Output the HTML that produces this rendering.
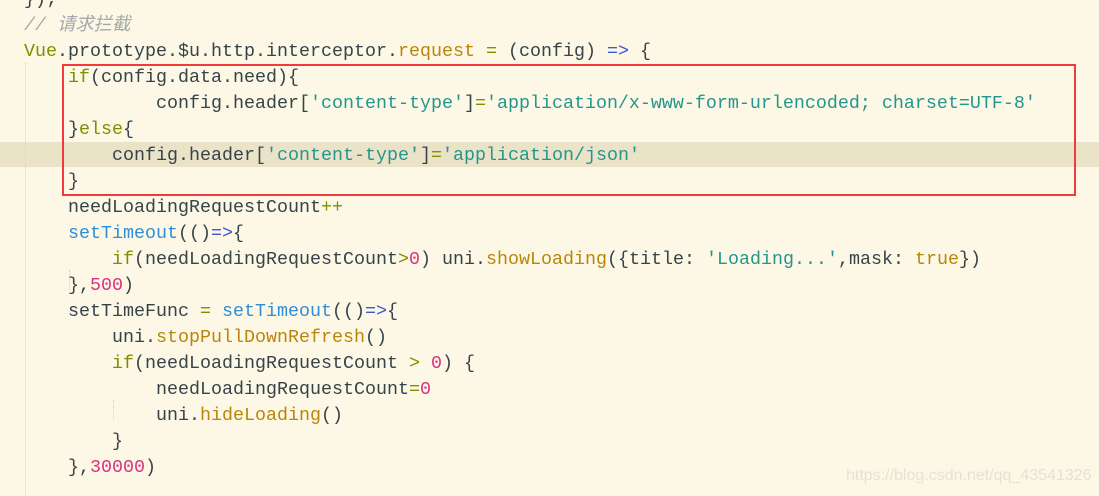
<!DOCTYPE html>
<html><head><meta charset="utf-8"><style>
html,body{margin:0;padding:0}
body{width:1099px;height:496px;overflow:hidden;background:#fdf8e6;position:relative;font-family:"Liberation Mono","Noto Sans CJK SC",monospace;font-size:18.33px;color:#36444a}
.hl{position:absolute;left:0;top:142px;width:1099px;height:25px;background:#ebe3c8}
.g{position:absolute;width:0;border-left:1px dotted #d8d2bd}
.box{position:absolute;left:62px;top:64px;width:1010px;height:128px;border:2px solid #ef3b3b}
.code{position:absolute;left:24px;top:-13px;margin:0}
.l{height:26px;line-height:26px;white-space:pre}
.c{color:#a3aaa8;font-style:italic}
.k{color:#7f8f00}
.s{color:#24968c}
.f{color:#2f8ed6}
.o{color:#b8860b}
.a{color:#3b57d4}
.n{color:#d6337e}
.wm{position:absolute;left:846px;top:467px;font-family:"Liberation Sans",sans-serif;font-size:16px;color:#e6e1d3}
</style></head><body>
<div class="hl"></div>
<div class="g" style="left:25px;top:63px;height:433px"></div>
<div class="g" style="left:69px;top:270px;height:20px"></div>
<div class="g" style="left:113px;top:400px;height:20px"></div>
<div class="box"></div>
<div class="code">
<div class="l">});</div>
<div class="l c">// 请求拦截</div>
<div class="l"><span class="k">Vue</span>.prototype.$u.http.interceptor.<span class="o">request</span> <span class="k">=</span> (config) <span class="a">=&gt;</span> {</div>
<div class="l">    <span class="k">if</span>(config.data.need){</div>
<div class="l">            config.header[<span class="s">'content-type'</span>]<span class="k">=</span><span class="s">'application/x-www-form-urlencoded; charset=UTF-8'</span></div>
<div class="l">    }<span class="k">else</span>{</div>
<div class="l">        config.header[<span class="s">'content-type'</span>]<span class="k">=</span><span class="s">'application/json'</span></div>
<div class="l">    }</div>
<div class="l">    needLoadingRequestCount<span class="k">++</span></div>
<div class="l">    <span class="f">setTimeout</span>(()<span class="a">=&gt;</span>{</div>
<div class="l">        <span class="k">if</span>(needLoadingRequestCount<span class="k">&gt;</span><span class="n">0</span>) uni.<span class="o">showLoading</span>({title: <span class="s">'Loading...'</span>,mask: <span class="o">true</span>})</div>
<div class="l">    },<span class="n">500</span>)</div>
<div class="l">    setTimeFunc <span class="k">=</span> <span class="f">setTimeout</span>(()<span class="a">=&gt;</span>{</div>
<div class="l">        uni.<span class="o">stopPullDownRefresh</span>()</div>
<div class="l">        <span class="k">if</span>(needLoadingRequestCount <span class="k">&gt;</span> <span class="n">0</span>) {</div>
<div class="l">            needLoadingRequestCount<span class="k">=</span><span class="n">0</span></div>
<div class="l">            uni.<span class="o">hideLoading</span>()</div>
<div class="l">        }</div>
<div class="l">    },<span class="n">30000</span>)</div>
</div>
<div class="wm">https://blog.csdn.net/qq_43541326</div>
</body></html>
